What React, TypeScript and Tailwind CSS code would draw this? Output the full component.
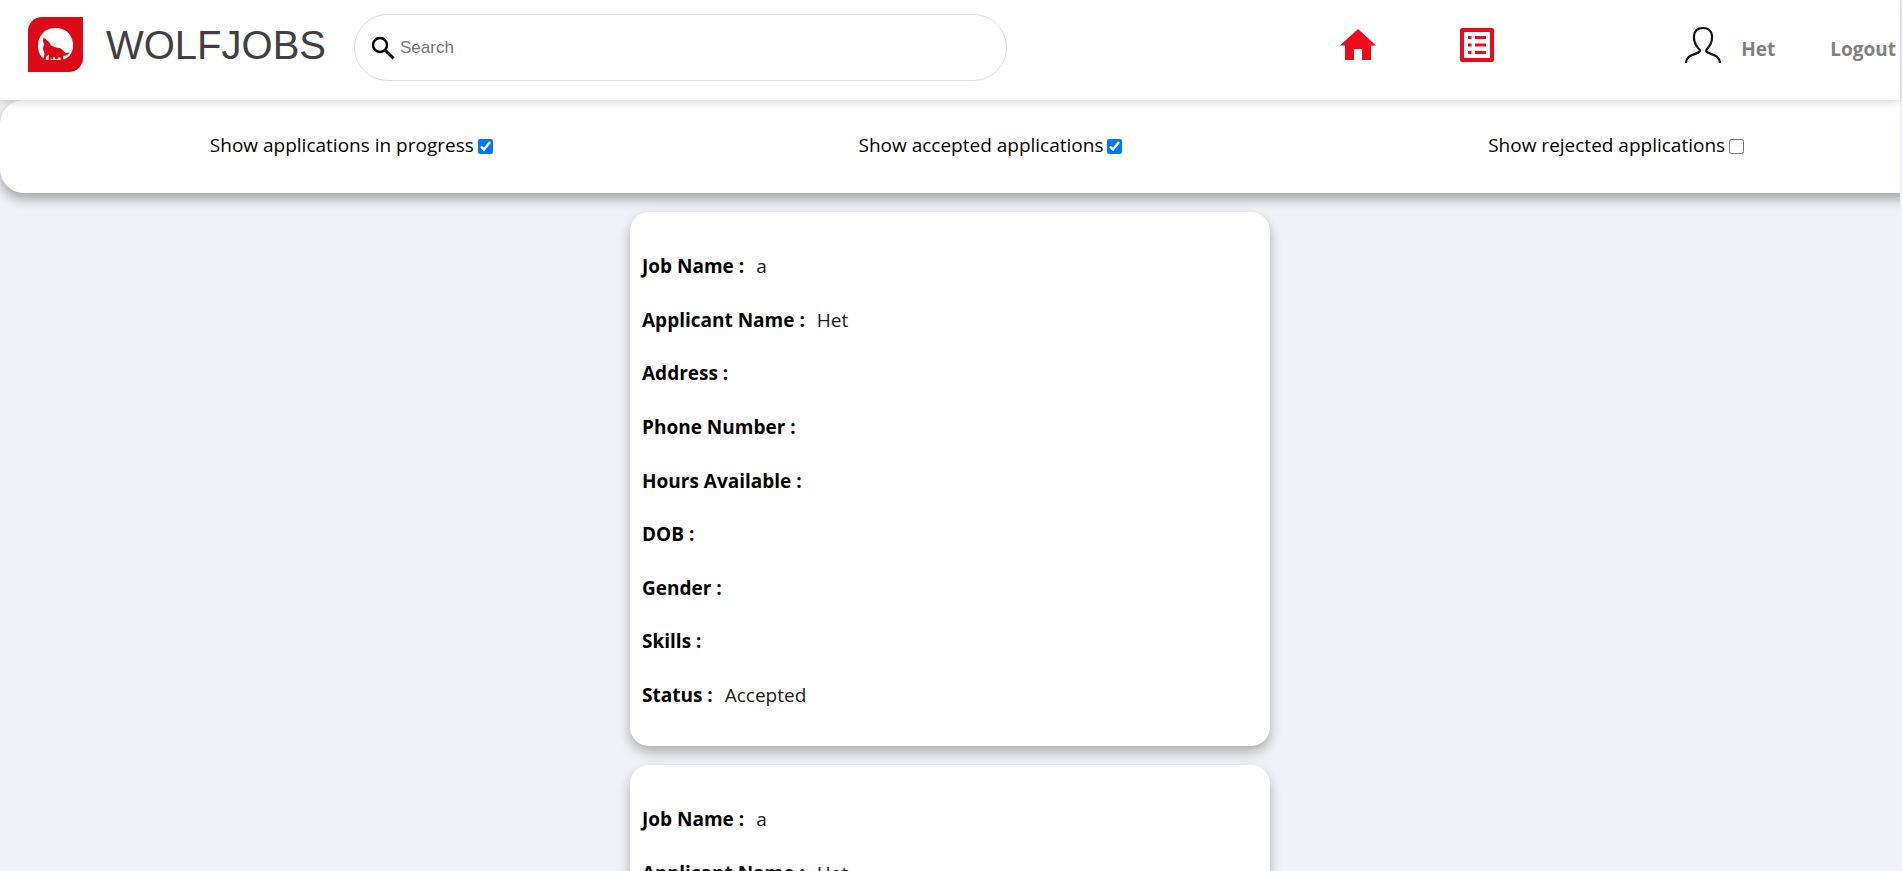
import { useState } from "react";

const fields = [
  { label: "Job Name", value: "a" },
  { label: "Applicant Name", value: "Het" },
  { label: "Address", value: "" },
  { label: "Phone Number", value: "" },
  { label: "Hours Available", value: "" },
  { label: "DOB", value: "" },
  { label: "Gender", value: "" },
  { label: "Skills", value: "" },
  { label: "Status", value: "Accepted" },
];

function Logo() {
  return (
    <svg viewBox="0 0 55 55" className="size-[55px] shrink-0" aria-hidden="true">
      <path d="M14 0H55V41A14 14 0 0 1 41 55H0V14A14 14 0 0 1 14 0Z" fill="#dc0a17" />
      <path d="M17 42.5C5 36 8 11 27.5 11C47 11 50 35 38 41.5L34 43H20Z" fill="#fff" />
      <path
        d="M15.5 20.5L17 21.5L21.5 25.5L23 28.5L28 30.5L32.5 31.2L35 33.5L37.5 36L41.5 35.5L40 37.5L37 38.8L35.5 38.8L35 41L36 44.5H33L32.5 41.5L31 40L29 42.5H27.5L27 40.5L25.5 40L25.2 42.5L23.5 42L23 40L22.5 43H20.5L20.8 37.5L18 40L17.5 43H15L16.5 37L14.8 31.5L16 27.5L15 24Z"
        fill="#dc0a17"
      />
    </svg>
  );
}

function Filter({ label, initial }: { label: string; initial: boolean }) {
  const [on, setOn] = useState(initial);
  return (
    <label className="flex items-center gap-1">
      {label}
      <input type="checkbox" checked={on} onChange={() => setOn(!on)} className="mt-[2px] size-[15px]" />
    </label>
  );
}

function ApplicationCard() {
  return (
    <article className="flex min-h-[534px] w-full max-w-[640px] flex-col justify-between rounded-[19px] bg-white px-3 pt-[41px] pb-[37px] shadow-[0_6px_12px_rgba(0,0,0,0.28)]">
      {fields.map((f) => (
        <div key={f.label} className="flex gap-3 leading-[27px]">
          <span className="font-bold">{f.label} :</span>
          <span className="text-[#1a1a1a]">{f.value}</span>
        </div>
      ))}
    </article>
  );
}

export default function App() {
  return (
    <div className="h-screen overflow-hidden bg-[#f0f1f6] pr-[2px] font-['Open_Sans','Noto_Sans',sans-serif] text-[19px] text-black">
      <header className="relative z-10 flex h-[100px] items-center bg-white shadow-[0_2px_8px_rgba(0,0,0,0.16)]">
        <a href="#home" className="flex items-center gap-[23px] pb-[11px] pl-7 font-['Liberation_Sans',Arial,sans-serif] text-[40px] leading-none text-[#404040]">
          <Logo />
          WOLFJOBS
        </a>
        <label className="mb-[5px] ml-7 flex h-[67px] w-[653px] items-center gap-[5px] rounded-full border border-[#dddddd] pl-4">
          <svg viewBox="0 0 24 24" className="size-6" aria-hidden="true">
            <circle cx="9" cy="9" r="7" fill="none" stroke="#000" strokeWidth="2.4" />
            <path d="M14 14L22.5 22.5" stroke="#000" strokeWidth="3" />
          </svg>
          <input
            type="search"
            aria-label="Search"
            placeholder="Search"
            className="grow bg-transparent font-['Liberation_Sans',Arial,sans-serif] text-[17px] outline-none placeholder:text-[#757575]"
          />
        </label>
        <nav className="ml-auto flex items-center">
          <a href="#home" aria-label="Home" className="mr-[84px] mb-[10px]">
            <svg viewBox="0 0 36 36" className="size-9" fill="#ee0a1a" aria-hidden="true">
              <path d="M18 2L36 18.5H31V33H22V22H14V33H5V18.5H0Z" />
            </svg>
          </a>
          <a href="#applications" aria-label="Applications" className="mr-[191px] mb-[10px]">
            <svg viewBox="0 0 34 34" className="size-[34px]" fill="#ee0a1a" aria-hidden="true">
              <path d="M2 0H32Q34 0 34 2V32Q34 34 32 34H2Q0 34 0 32V2Q0 0 2 0ZM4 4V30H30V4Z" fillRule="evenodd" />
              <path d="M8 8H11.5V11H8ZM15 8H26V11H15ZM8 15.5H11.5V18.5H8ZM15 15.5H26V18.5H15ZM8 23H11.5V26H8ZM15 23H26V26H15Z" />
            </svg>
          </a>
          <a href="#profile" className="mr-[55px] flex items-center gap-5 pb-[2px] font-bold text-[#808080]">
            <svg viewBox="0 0 36 38" className="mb-2 h-[38px] w-9" fill="none" stroke="#111" strokeWidth="2.2" aria-hidden="true">
              <path d="M1 37C1 28 12 29 14.5 25.5C15.5 24.5 14.5 23.5 13.5 22.5C7.5 16 6 2 18 2S28.5 16 22.5 22.5C21.5 23.5 20.5 24.5 21.5 25.5C24 29 35 28 35 37" />
            </svg>
            Het
          </a>
          <button type="button" className="mr-1 pb-[2px] font-bold text-[#808080]">
            Logout
          </button>
        </nav>
      </header>
      <section className="overflow-x-clip pb-[19px]">
        <div className="-mr-[27px] flex h-[93px] items-center justify-around rounded-[24px] bg-white pb-[3px] pl-[27px] shadow-[0_6px_12px_rgba(0,0,0,0.32)]">
          <Filter label="Show applications in progress" initial={true} />
          <Filter label="Show accepted applications" initial={true} />
          <Filter label="Show rejected applications" initial={false} />
        </div>
      </section>
      <main className="flex flex-col items-center gap-[19px]">
        <ApplicationCard />
        <ApplicationCard />
      </main>
    </div>
  );
}
